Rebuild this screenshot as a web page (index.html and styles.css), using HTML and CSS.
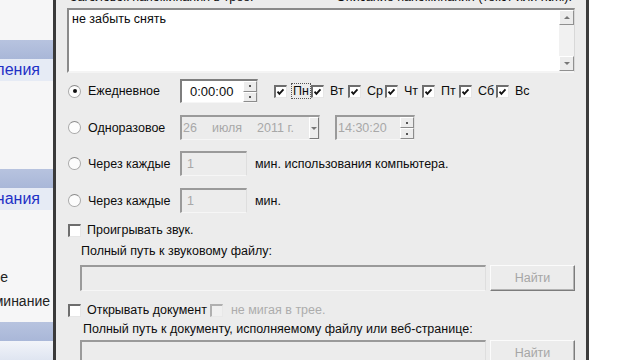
FILE: index.html
```html
<!DOCTYPE html>
<html lang="ru">
<head>
    <meta charset="UTF-8">
    <title>Напоминание</title>
    <link rel="stylesheet" href="styles.css">
</head>
<body>
    <aside class="sidebar">
        <div class="side-top"></div>
        <div class="side-band"></div>
        <div class="side-title"><span>Параметры уведомления</span></div>
        <div class="side-space"></div>
        <div class="side-band"></div>
        <div class="side-title"><span>Текст напоминания</span></div>
        <div class="side-list">
            <div class="side-item one"><span>Добавить новое</span></div>
            <div class="side-item two"><span>Удалить напоминание</span></div>
        </div>
        <div class="side-band"></div>
        <div class="side-foot"></div>
    </aside>

    <main class="dialog">
        <div class="header">
            <span>Заголовок напоминания в трее:</span>
            <span>Описание напоминания (текст или html):</span>
        </div>

        <div class="memo">
            <div class="memo-text">не забыть снять</div>
            <div class="scrollbar">
                <div class="scroll-btn"><i class="arrow up"></i></div>
                <div class="scroll-track"></div>
                <div class="scroll-btn"><i class="arrow down"></i></div>
            </div>
        </div>

        <div class="row row-daily">
            <div class="option"><span class="radio checked"></span>Ежедневное</div>
            <div class="field time">
                <span class="value">0:00:00</span>
                <div class="spin"><div class="spin-btn"><i class="dot"></i></div><div class="spin-btn"><i class="dot"></i></div></div>
            </div>
            <div class="days">
                <label class="day"><span class="check on"><svg viewBox="0 0 13 13"><polyline points="3,6 5.2,8.6 10,3.4"/></svg></span><span class="focus">Пн</span></label>
                <label class="day"><span class="check on"><svg viewBox="0 0 13 13"><polyline points="3,6 5.2,8.6 10,3.4"/></svg></span>Вт</label>
                <label class="day"><span class="check on"><svg viewBox="0 0 13 13"><polyline points="3,6 5.2,8.6 10,3.4"/></svg></span>Ср</label>
                <label class="day"><span class="check on"><svg viewBox="0 0 13 13"><polyline points="3,6 5.2,8.6 10,3.4"/></svg></span>Чт</label>
                <label class="day"><span class="check on"><svg viewBox="0 0 13 13"><polyline points="3,6 5.2,8.6 10,3.4"/></svg></span>Пт</label>
                <label class="day"><span class="check on"><svg viewBox="0 0 13 13"><polyline points="3,6 5.2,8.6 10,3.4"/></svg></span>Сб</label>
                <label class="day"><span class="check on"><svg viewBox="0 0 13 13"><polyline points="3,6 5.2,8.6 10,3.4"/></svg></span>Вс</label>
            </div>
        </div>

        <div class="row row-once">
            <div class="option"><span class="radio"></span>Одноразовое</div>
            <div class="field disabled date">
                <span class="value">26</span><span class="value month">июля</span><span class="value">2011 г.</span>
                <div class="drop"><i class="arrow down"></i></div>
            </div>
            <div class="field disabled time2">
                <span class="value">14:30:20</span>
                <div class="spin"><div class="spin-btn"><i class="dot"></i></div><div class="spin-btn"><i class="dot"></i></div></div>
            </div>
        </div>

        <div class="row row-every">
            <div class="option"><span class="radio"></span>Через каждые</div>
            <div class="field disabled small"><span class="value">1</span></div>
            <span class="unit">мин. использования компьютера.</span>
        </div>

        <div class="row row-every2">
            <div class="option"><span class="radio"></span>Через каждые</div>
            <div class="field disabled small"><span class="value">1</span></div>
            <span class="unit">мин.</span>
        </div>

        <div class="row row-sound">
            <span class="check"></span>Проигрывать звук.
        </div>
        <div class="caption caption-sound">Полный путь к звуковому файлу:</div>
        <div class="row path-row path-sound">
            <div class="field disabled path"></div>
            <div class="button">Найти</div>
        </div>

        <div class="row row-doc">
            <span class="check"></span>Открывать документ<span class="check off"></span><span class="muted">не мигая в трее.</span>
        </div>
        <div class="caption caption-doc">Полный путь к документу, исполняемому файлу или веб-странице:</div>
        <div class="row path-row path-doc">
            <div class="field disabled path"></div>
            <div class="button">Найти</div>
        </div>
    </main>

    <div class="backdrop"></div>
</body>
</html>
```

FILE: styles.css
```css
body {
    margin: 0;
    width: 640px;
    height: 360px;
    overflow: hidden;
    display: flex;
    background-color: #ffffff;
    font-family: "Liberation Sans", Arial, sans-serif;
    font-size: 12.5px;
    color: #0c0c0c;
}

/* left navigation panel */
.sidebar {
    width: 53px;
    flex-shrink: 0;
    border-right: 3px solid #3a3a3a;
    background-color: #f6f6f7;
    display: flex;
    flex-direction: column;
    overflow: hidden;
}

.side-top {
    height: 40px;
}

.side-band {
    height: 19px;
    background: linear-gradient(#b7c3df, #a9b7d8);
    flex-shrink: 0;
}

.side-title {
    height: 22px;
    background-color: #e6ebf5;
    display: flex;
    justify-content: flex-end;
    align-items: center;
    white-space: nowrap;
    padding-right: 13px;
    color: #1f30c6;
    font-size: 16px;
    flex-shrink: 0;
}

.side-space {
    height: 88px;
}

.side-list {
    height: 112px;
    display: flex;
    flex-direction: column;
}

.side-item {
    display: flex;
    justify-content: flex-end;
    white-space: nowrap;
    font-size: 14px;
    color: #222;
    height: 20px;
    align-items: center;
}

.side-item.one {
    margin-top: 57px;
    padding-right: 45px;
}

.side-item.two {
    margin-top: 4px;
    padding-right: 3px;
}

.side-foot {
    flex: 1;
    background: linear-gradient(#f2f4f9, #dfe5f1);
}

/* dialog */
.dialog {
    width: 508px;
    flex-shrink: 0;
    margin-top: -10px;
    height: 380px;
    padding: 0 11px;
    background-color: #ececec;
    border-right: 3px solid #3c3c3c;
    display: flex;
    flex-direction: column;
}

.backdrop {
    flex: 1;
    background-color: #ffffff;
}

.header {
    height: 14px;
    display: flex;
    justify-content: space-between;
    align-items: center;
    padding: 0 3px 0 3px;
    white-space: nowrap;
}

.memo {
    margin-top: 4px;
    height: 61px;
    display: flex;
    background-color: #fff;
    border-top: 2px solid #8a8a8a;
    border-left: 2px solid #8a8a8a;
    border-bottom: 2px solid #f4f4f4;
    border-right: 1px solid #d8d8d8;
}

.memo-text {
    flex: 1;
    padding: 2px 3px;
    line-height: 15px;
}

.scrollbar {
    width: 15px;
    display: flex;
    flex-direction: column;
    background-color: #f1f1f1;
}

.scroll-btn {
    height: 13px;
    background-color: #ececec;
    border: 1px solid;
    border-color: #fff #909090 #909090 #fff;
    display: flex;
    align-items: center;
    justify-content: center;
}

.scroll-track {
    flex: 1;
}

.arrow {
    width: 0;
    height: 0;
    border-left: 3px solid transparent;
    border-right: 3px solid transparent;
}

.arrow.up {
    border-bottom: 3px solid #777;
}

.arrow.down {
    border-top: 3px solid #777;
}

.row {
    display: flex;
    align-items: center;
    white-space: nowrap;
}

.row-daily {
    margin-top: 6px;
    height: 24px;
}

.row-once {
    margin-top: 12px;
    height: 25px;
}

.row-every {
    margin-top: 11px;
    height: 25px;
}

.row-every2 {
    margin-top: 12px;
    height: 25px;
}

.option {
    width: 113px;
    display: flex;
    align-items: center;
    flex-shrink: 0;
}

.radio {
    width: 11px;
    height: 11px;
    margin: 0 7px 0 1px;
    border-radius: 50%;
    border: 1px solid #a8a8a8;
    border-top-color: #8a8a8a;
    background-color: #fcfcfc;
    display: flex;
    align-items: center;
    justify-content: center;
}

.radio.checked::after {
    content: "";
    width: 4px;
    height: 4px;
    border-radius: 50%;
    background-color: #111;
}

.field {
    height: 100%;
    box-sizing: border-box;
    display: flex;
    align-items: center;
    background-color: #fff;
    border-top: 2px solid #7e7e7e;
    border-left: 2px solid #7e7e7e;
    border-bottom: 1px solid #f6f6f6;
    border-right: 1px solid #dedede;
    padding-left: 8px;
}

.field.disabled {
    background-color: #ececec;
    color: #a8a8a8;
    border-top-color: #9a9a9a;
    border-left-color: #9a9a9a;
}

.field.time {
    width: 78px;
    font-size: 13px;
}

.field .value {
    flex: 1;
}

.spin {
    width: 14px;
    height: 100%;
    display: flex;
    flex-direction: column;
}

.spin-btn {
    flex: 1;
    background-color: #ececec;
    border: 1px solid;
    border-color: #fff #8c8c8c #8c8c8c #fff;
    display: flex;
    align-items: center;
    justify-content: center;
}

.dot {
    width: 2px;
    height: 2px;
    background-color: #555;
}

.days {
    margin-left: 16px;
    display: flex;
    gap: 4px;
}

.day {
    display: flex;
    align-items: center;
    width: 33px;
}

.check {
    width: 13px;
    height: 13px;
    box-sizing: border-box;
    flex-shrink: 0;
    background-color: #fff;
    border-top: 2px solid #6e6e6e;
    border-left: 2px solid #6e6e6e;
    border-bottom: 1px solid #e6e6e6;
    border-right: 1px solid #e6e6e6;
    margin-right: 6px;
    display: flex;
}

.check svg {
    width: 12px;
    height: 12px;
    margin: -1px 0 0 -1px;
    fill: none;
    stroke: #111;
    stroke-width: 2.2;
}

.check.off {
    background-color: #f0f0f0;
    border-color: #b0b0b0 #e8e8e8 #e8e8e8 #b0b0b0;
    margin: 0 8px 0 3px;
}

.focus {
    outline: 1px dotted #555;
    padding: 0 1px;
    margin-left: -1px;
}

.field.date {
    width: 140px;
    margin-left: 0;
    padding-left: 1px;
}

.field.date .value {
    flex: none;
    margin-right: 15px;
}

.drop {
    margin-left: auto;
    width: 14px;
    height: 100%;
    background-color: #ececec;
    border: 1px solid;
    border-color: #fff #7a7a7a #7a7a7a #fff;
    box-sizing: border-box;
    display: flex;
    align-items: center;
    justify-content: center;
}

.field.time2 {
    width: 80px;
    margin-left: 15px;
    padding-left: 1px;
}

.field.small {
    width: 67px;
    padding-left: 5px;
}

.unit {
    margin-left: 8px;
}

.row-sound {
    margin-top: 9px;
    height: 16px;
}

.row-sound .check,
.row-doc > .check:first-child {
    margin: 0 6px 0 1px;
}

.caption {
    height: 14px;
    display: flex;
    align-items: center;
    white-space: nowrap;
}

.caption-sound {
    margin-top: 6px;
    padding-left: 14px;
}

.path-row {
    height: 26px;
}

.path-sound {
    margin-top: 7px;
}

.field.path {
    width: 406px;
    margin-left: 13px;
}

.button {
    margin-left: 4px;
    width: 85px;
    height: 100%;
    box-sizing: border-box;
    border: 1px solid;
    border-color: #fbfbfb #7c7c7c #7c7c7c #fbfbfb;
    box-shadow: inset -1px -1px #b4b4b4;
    display: flex;
    align-items: center;
    justify-content: center;
    color: #a6a6a6;
}

.row-doc {
    margin-top: 11px;
    height: 16px;
}

.muted {
    color: #acacac;
}

.caption-doc {
    margin-top: 4px;
    padding-left: 16px;
}

.path-doc {
    margin-top: 4px;
}
```
